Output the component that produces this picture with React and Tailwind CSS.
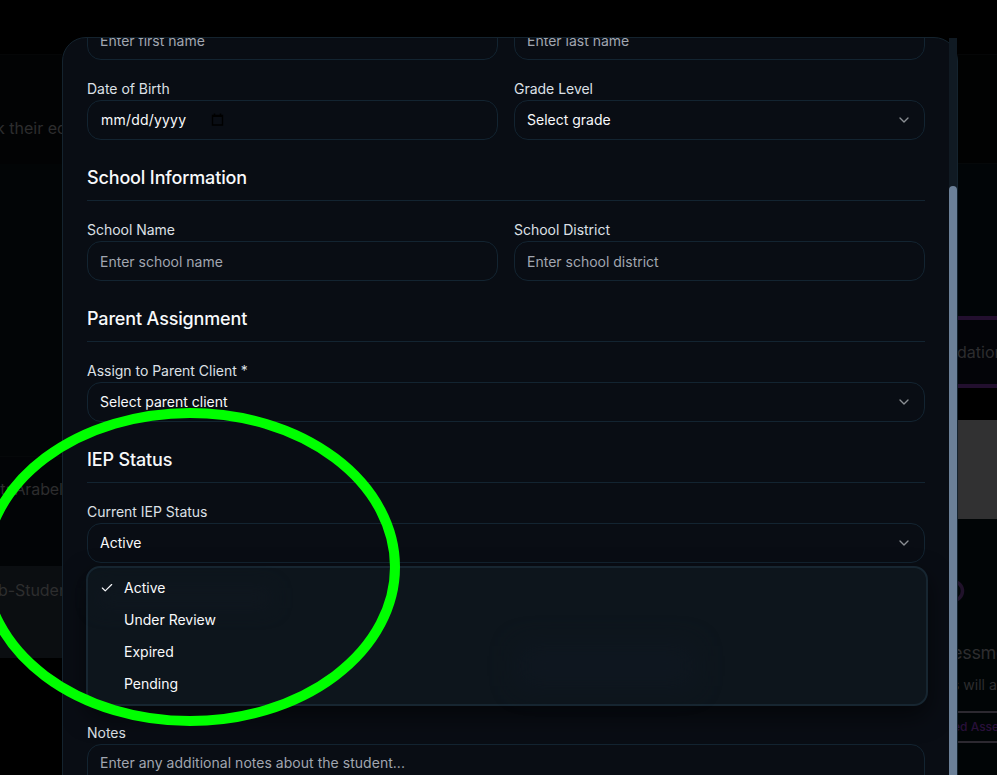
import React from "react";
import { Check, ChevronDown } from "lucide-react";

function Label({ children }) {
  return <label className="block h-6 pt-[3px] text-sm leading-5 tracking-[-0.02px] text-[#dde0e6]">{children}</label>;
}

function Field({ label, children }) {
  return (
    <div>
      <Label>{label}</Label>
      {children}
    </div>
  );
}

function TextBox({ children }) {
  return (
    <div className="flex h-10 items-center rounded-[14px] border border-[#132431] px-3 pt-0.5 text-sm text-[#a1a6b0]">
      {children}
    </div>
  );
}

function SelectBox({ children }) {
  return (
    <div className="flex h-10 items-center justify-between rounded-[14px] border border-[#132431] px-3 text-sm text-[#f8f9fb]">
      <span>{children}</span>
      <ChevronDown className="size-4 text-[#8b8f94]" />
    </div>
  );
}

function DateBox() {
  return (
    <div className="flex h-10 items-center gap-6 rounded-[14px] border border-[#132431] px-[13px] text-sm text-[#f8f9fb]">
      <span className="w-[86px] tracking-[0.2px]">mm/dd/yyyy</span>
      <svg className="size-3.5 text-black" viewBox="0 0 14 14" fill="none" stroke="currentColor">
        <path d="M1.5 2.5h10v9.5h-10z" strokeWidth="1.4" />
        <path d="M1 3.2h11M3.5 .5v2M9.5 .5v2" strokeWidth="1.6" />
      </svg>
    </div>
  );
}

function Section({ title, children }) {
  return (
    <section className="mt-6">
      <h3 className="h-[37px] border-b border-[#132431] text-lg leading-7 font-medium tracking-[-0.15px] text-[#f8f9fb]">{title}</h3>
      <div className="mt-4">{children}</div>
    </section>
  );
}

const statuses = ["Active", "Under Review", "Expired", "Pending"];

function StatusMenu() {
  return (
    <div className="absolute top-[43px] -left-px h-[140px] w-[842px] rounded-[14px] border-2 border-[#172631] bg-[#0d151c] p-1 shadow-[0_10px_24px_rgba(0,0,0,0.55)]">
      <div className="absolute top-5 left-2 h-5 w-44 bg-[#111821] opacity-60 blur-[10px]" />
      <div className="absolute top-[78px] left-[430px] h-10 w-44 bg-[#101823] opacity-60 blur-[14px]" />
      <ul className="relative text-sm text-[#f8f9fb]">
        {statuses.map((s, i) => (
          <li key={s} className="flex h-8 items-center">
            <span className="flex w-8 pl-2">{i === 0 && <Check className="size-3.5" />}</span>
            {s}
          </li>
        ))}
      </ul>
    </div>
  );
}

function LeftBackdrop() {
  return (
    <div className="flex w-[62px] flex-col overflow-hidden text-base whitespace-nowrap text-[#2d2d2e]">
      <div className="h-[55px] border-b border-[#050607]" />
      <div className="flex h-[109px] items-center justify-start bg-[#020304] pt-9">
        <span className="-ml-1">k their education</span>
      </div>
      <div className="h-[292px] bg-[#020506]" />
      <div className="flex h-[110px] items-center border-t border-[#050809] bg-[#020406] pb-[45px]">
        <span className="-ml-[9px] tracking-[-0.1px]">nt: Arabella</span>
      </div>
      <div className="h-[92px] bg-[#0b0e11] pt-3">
        <span className="-ml-0.5 tracking-[-0.05px]">b-Student</span>
      </div>
      <div className="flex-1 bg-black" />
    </div>
  );
}

function RightBackdrop() {
  return (
    <div className="flex w-10 flex-col overflow-hidden whitespace-nowrap text-[#2d2d2f]">
      <div className="h-[55px] border-b border-[#050607]" />
      <div className="h-[109px] border-b border-[#050809] bg-[#010202]" />
      <div className="h-[152px] bg-[#010507]" />
      <div className="flex h-[72px] items-center border-y-4 border-[#220f2e] bg-[#030408] text-base">dation</div>
      <div className="h-8 bg-black" />
      <div className="h-[99px] bg-[#313132]" />
      <div className="flex-1 bg-[#010506]">
        <svg className="mt-[60px] -ml-4 size-6" viewBox="0 0 24 24" fill="none" stroke="#20122a" strokeWidth="3.5">
          <circle cx="12" cy="12" r="9.5" />
        </svg>
        <div className="mt-9 -ml-[5px] text-lg leading-7 tracking-[-0.3px]">essments</div>
        <div className="-ml-[5px] pt-1.5 text-sm leading-6">s will appear</div>
        <div className="mt-[14px] -ml-1 h-8 border-y-2 border-[#2c2930] text-xs leading-[27px] font-medium text-[#29103a]">ed Assessment</div>
      </div>
    </div>
  );
}

export default function App() {
  return (
    <div className="relative h-[775px] w-[997px] overflow-hidden bg-black font-['Inter',sans-serif]">
      <div className="flex h-full justify-between">
        <LeftBackdrop />
        <RightBackdrop />
      </div>

      <div className="absolute top-[37px] left-[62px] flex h-[760px] w-[896px] rounded-t-[24px] border border-[#14232e] bg-[#090d14]">
        <div className="w-[886px] overflow-hidden rounded-tl-[23px] pr-6 pl-6">
          <div className="-mt-[18px] grid grid-cols-2 gap-4">
            <TextBox>Enter first name</TextBox>
            <TextBox>Enter last name</TextBox>
            <Field label="Date of Birth">
              <DateBox />
            </Field>
            <Field label="Grade Level">
              <SelectBox>Select grade</SelectBox>
            </Field>
          </div>
          <Section title="School Information">
            <div className="grid grid-cols-2 gap-4">
              <Field label="School Name">
                <TextBox>Enter school name</TextBox>
              </Field>
              <Field label="School District">
                <TextBox>Enter school district</TextBox>
              </Field>
            </div>
          </Section>
          <Section title="Parent Assignment">
            <Field label="Assign to Parent Client *">
              <SelectBox>Select parent client</SelectBox>
            </Field>
          </Section>
          <Section title="IEP Status">
            <Field label="Current IEP Status">
              <div className="relative">
                <SelectBox>Active</SelectBox>
                <StatusMenu />
              </div>
            </Field>
          </Section>
          <div className="mt-[157px]">
            <Field label="Notes">
              <div className="h-24 rounded-[14px] border border-[#132431] px-3 py-2 text-sm tracking-[0.03px] text-[#a1a6b0]">
                Enter any additional notes about the student...
              </div>
            </Field>
          </div>
        </div>
        <div className="w-2 shrink-0 bg-[#101a23] pt-[148px]">
          <div className="h-full rounded-t-full bg-[#6b8098]" />
        </div>
      </div>

      <svg className="pointer-events-none absolute inset-0 size-full" viewBox="0 0 997 775" fill="none">
        <ellipse cx="190" cy="567" rx="205" ry="154" stroke="#00ff00" strokeWidth="10" />
      </svg>
    </div>
  );
}
